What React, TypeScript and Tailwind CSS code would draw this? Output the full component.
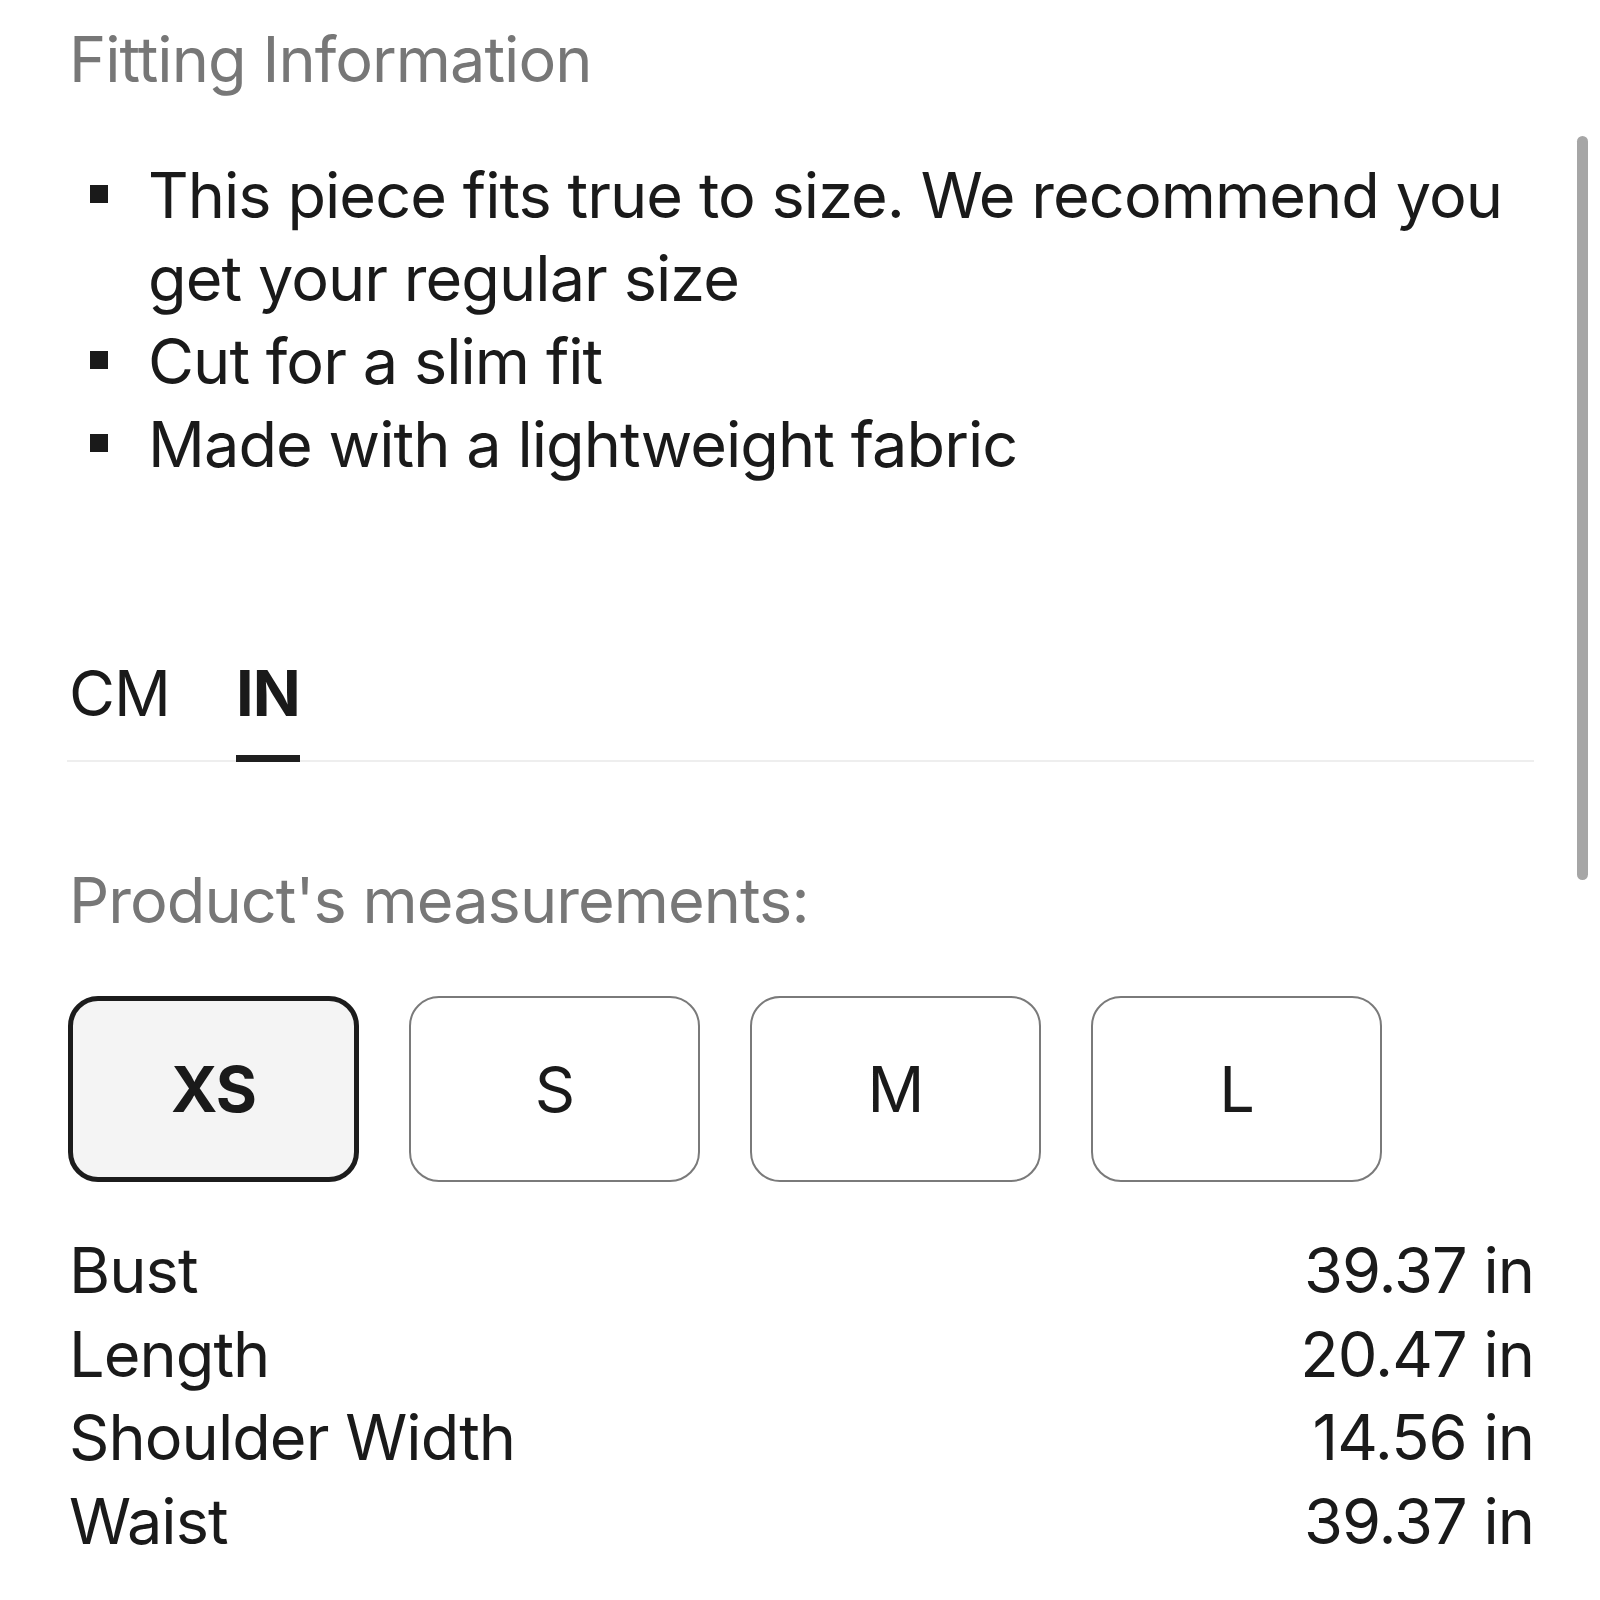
const bullets = [
  "This piece fits true to size. We recommend you get your regular size",
  "Cut for a slim fit",
  "Made with a lightweight fabric",
];

const sizes = ["XS", "S", "M", "L"];

const rows = [
  { label: "Bust", value: "39.37 in" },
  { label: "Length", value: "20.47 in" },
  { label: "Shoulder Width", value: "14.56 in" },
  { label: "Waist", value: "39.37 in" },
];

function Tab({ label, active }: { label: string; active?: boolean }) {
  return (
    <div className="flex flex-col items-center px-[2px]">
      <span className={active ? "font-bold text-[#1a1a1a]" : "text-[#1a1a1a]"}>{label}</span>
      <span className={"mt-[20px] -mb-[2px] h-[7px] w-full " + (active ? "bg-[#1f1f1f]" : "bg-transparent")}></span>
    </div>
  );
}

export default function App() {
  const selected = "XS";
  return (
    <div className="relative w-[1600px] h-[1600px] overflow-hidden bg-white pl-[69px] pr-[66px] pt-[18px] font-['Inter',sans-serif] text-[63px] leading-[83px] tracking-[-0.015em] text-[#1a1a1a]">
      <h1 className="text-[#777777]">Fitting Information</h1>

      <ul className="mt-[53px] flex flex-col">
        {bullets.map((b) => (
          <li key={b} className="flex">
            <span className="mt-[31px] ml-[21px] h-[18px] w-[18px] shrink-0 bg-[#1a1a1a]"></span>
            <span className="ml-[40px]">{b}</span>
          </li>
        ))}
      </ul>

      <div className="mt-[166px] flex gap-[62px] border-b-2 border-[#eeeeee] -ml-[2px]">
        <Tab label="CM" />
        <Tab label="IN" active />
      </div>

      <p className="mt-[97px] text-[#777777]">Product's measurements:</p>

      <div className="mt-[54px] -ml-[1px] flex gap-[50px]">
        {sizes.map((s) => (
          <div
            key={s}
            className={
              s === selected
                ? "flex h-[186px] w-[291px] items-center justify-center rounded-[30px] border-[5px] border-[#1c1c1c] bg-[#f4f4f4] font-bold"
                : "flex h-[186px] w-[291px] items-center justify-center rounded-[30px] border-[2.5px] border-[#7a7a7a] bg-white"
            }
          >
            {s}
          </div>
        ))}
      </div>

      <div className="mt-[47px] flex flex-col leading-[83.5px]">
        {rows.map((r) => (
          <div key={r.label} className="flex justify-between">
            <span>{r.label}</span>
            <span>{r.value}</span>
          </div>
        ))}
      </div>

      <div className="absolute right-[12px] top-[136px] h-[744px] w-[11px] rounded-full bg-[#a6a6a6]"></div>
    </div>
  );
}
